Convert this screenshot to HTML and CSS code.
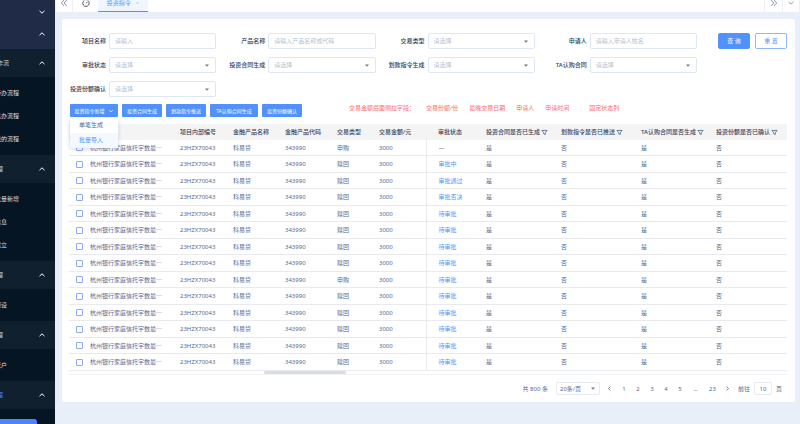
FILE: index.html
```
<!DOCTYPE html>
<html lang="zh-CN">

<head>
	<meta charset="UTF-8">
	<title>投资指令</title>
	<link rel="stylesheet" href="styles.css">
</head>

<body>
	<svg class="defs">
		<symbol id="up" viewBox="0 0 8 8"><path d="M1.5 5.2 4 2.8l2.5 2.4" /></symbol>
		<symbol id="down" viewBox="0 0 8 8"><path d="M1.5 2.8 4 5.2l2.5-2.4" /></symbol>
		<symbol id="left" viewBox="0 0 8 8"><path d="M5 1.8 2.8 4 5 6.2" /></symbol>
		<symbol id="right" viewBox="0 0 8 8"><path d="M3 1.8 5.2 4 3 6.2" /></symbol>
		<symbol id="dleft" viewBox="0 0 8 8"><path d="M4 1 1.3 4 4 7M6.8 1 4.1 4l2.7 3" /></symbol>
		<symbol id="dright" viewBox="0 0 8 8"><path d="M1.2 1l2.7 3-2.7 3M4 1l2.7 3L4 7" /></symbol>
		<symbol id="gauge" viewBox="0 0 8 8"><path d="M2.4 1.4a3.2 3.2 0 1 0 3.2 0M4 4.4l1.5-1.6M2.6.6h2.8" /></symbol>
		<symbol id="filter" viewBox="0 0 8 8"><path d="M1 1.6h6L4.9 4.3v2L3.1 5.5V4.3z" /></symbol>
	</svg>

	<nav class="sidebar">
		<div class="menu">
			<button class="top first"><svg><use href="#down" /></svg></button>
			<button class="top"><svg><use href="#up" /></svg></button>
			<button class="group"><span>工作流</span><svg><use href="#up" /></svg></button>
			<ul>
				<li><a href="#">待办流程</a></li>
				<li><a href="#">已办流程</a></li>
				<li><a href="#">我的流程</a></li>
			</ul>
			<button class="group"><span>管理</span><svg><use href="#up" /></svg></button>
			<ul>
				<li><a href="#">批量新增</a></li>
				<li><a href="#">信息</a></li>
				<li><a href="#">成立</a></li>
			</ul>
			<button class="group"><span>管理</span><svg><use href="#up" /></svg></button>
			<ul>
				<li><a href="#">预设</a></li>
			</ul>
			<button class="group"><span>管理</span><svg><use href="#up" /></svg></button>
			<ul>
				<li><a href="#">账户</a></li>
			</ul>
			<button class="group active"><span>管理</span><svg><use href="#up" /></svg></button>
			<ul>
				<li><a class="current" href="#"></a></li>
			</ul>
		</div>
	</nav>

	<main>
		<header class="tabs">
			<button class="tool"><svg><use href="#dleft" /></svg></button>
			<button class="home"><svg><use href="#gauge" /></svg></button>
			<a class="tab" href="#">投资指令<span>×</span></a>
			<button class="tool end"><svg><use href="#dright" /></svg></button>
			<button class="tool"><svg><use href="#down" /></svg></button>
		</header>

		<section class="card">
			<form class="search">
				<div class="fields">
					<label for="project">项目名称</label>
					<input id="project" type="text" placeholder="请输入">
					<label for="product">产品名称</label>
					<input id="product" type="text" placeholder="请输入产品名称或代码">
					<label for="type">交易类型</label>
					<select id="type"><option>请选择</option></select>
					<label for="user">申请人</label>
					<input id="user" type="text" placeholder="请输入申请人姓名">
					<label for="state">审批状态</label>
					<select id="state"><option>请选择</option></select>
					<label for="contract">投资合同生成</label>
					<select id="contract"><option>请选择</option></select>
					<label for="transfer">划款指令生成</label>
					<select id="transfer"><option>请选择</option></select>
					<label for="ta">TA认购合同</label>
					<select id="ta"><option>请选择</option></select>
					<label for="share">投资份额确认</label>
					<select id="share"><option>请选择</option></select>
				</div>
				<button type="button" class="query">查 询</button>
				<button type="reset" class="reset">重 置</button>
			</form>

			<div class="actions">
				<div class="dropdown">
					<button class="wide">投资指令新增<svg><use href="#down" /></svg></button>
					<div class="options">
						<a href="#">单笔生成</a>
						<a class="hover" href="#">批量导入</a>
					</div>
				</div>
				<button>投资合同生成</button>
				<button>划款指令推送</button>
				<button class="wide">TA认购合同生成</button>
				<button>投资份额确认</button>
				<p class="note">
					<span>交易金额后面侧拉字段：</span>
					<span>交易份额/份</span>
					<span>最晚交易日期</span>
					<span>申请人</span>
					<span>申请时间</span>
					<span class="fixed">固定状态列</span>
				</p>
			</div>

			<table>
				<colgroup>
					<col class="w-check">
					<col class="w-name">
					<col class="w-code">
					<col class="w-mid">
					<col class="w-mid">
					<col class="w-type">
					<col class="w-money">
					<col class="w-status">
					<col class="w-flag">
					<col class="w-flag-l">
					<col class="w-flag">
					<col class="w-last">
				</colgroup>
				<thead>
					<tr>
						<th></th>
						<th></th>
						<th>项目内部编号</th>
						<th>金融产品名称</th>
						<th>金融产品代码</th>
						<th>交易类型</th>
						<th>交易金额/元</th>
						<th class="status">审批状态</th>
						<th>投资合同是否已生成<svg><use href="#filter" /></svg></th>
						<th>划款指令是否已推送<svg><use href="#filter" /></svg></th>
						<th>TA认购合同是否生成<svg><use href="#filter" /></svg></th>
						<th>投资份额是否已确认<svg><use href="#filter" /></svg></th>
					</tr>
				</thead>
				<tbody></tbody>
			</table>
			<div class="scroll"><div class="thumb"></div></div>

			<footer class="pager">
				<span class="total">共 800 条</span>
				<select class="size" aria-label="每页条数"><option>20条/页</option></select>
				<button aria-label="上一页"><svg><use href="#left" /></svg></button>
				<button>1</button>
				<button>2</button>
				<button>3</button>
				<button>4</button>
				<button>5</button>
				<span class="more">...</span>
				<button class="last">23</button>
				<button aria-label="下一页"><svg><use href="#right" /></svg></button>
				<label for="page">前往</label>
				<input id="page" type="text" value="10">
				<span>页</span>
			</footer>
		</section>
	</main>

	<script>
		var states = ['—', '审批中', '审批通过', '审批否决']
		var tbody = document.querySelector('tbody')
		var res = ''

		// 生成表格数据
		for (var i = 0; i < 14; i++) {
			var type = i === 0 || i === 8 ? '申购' : '赎回'
			var text = states[i] || '待审批'
			res += '<tr>'
			res += '<td class="check"><input type="checkbox" aria-label="选择第' + (i + 1) + '行"></td>'
			res += '<td>杭州银行家庭信托字数最⋯</td><td>23HZX70043</td><td>科易贷</td><td>343990</td>'
			res += '<td>' + type + '</td><td>3000</td>'
			res += '<td class="status">' + (i ? '<a href="#">' + text + '</a>' : text) + '</td>'
			res += '<td>是</td><td>否</td><td>是</td><td>否</td>'
			res += '</tr>'
		}
		tbody.innerHTML = res
	</script>
</body>

</html>
```
FILE: styles.css
```
* {
	box-sizing: border-box;
}

body {
	display: flex;
	min-height: 100vh;
	margin: 0;
	overflow: hidden;
	background-color: #e9eff8;
	color: #566a94;
	font: 6px/10px "Noto Sans", "Noto Sans CJK SC", sans-serif;
}

button,
input,
select {
	margin: 0;
	padding: 0;
	border: 0;
	background: none;
	color: inherit;
	font: inherit;
}

a {
	color: #5594fb;
	text-decoration: none;
}

svg {
	width: 8px;
	height: 8px;
	fill: none;
	stroke: currentColor;
}

.defs {
	position: absolute;
	width: 0;
	height: 0;
}

/* 左侧菜单 */
.sidebar {
	flex: none;
	width: 55px;
	height: 100vh;
	overflow: hidden;
	background-color: #051523;
}

.menu {
	margin-left: -24px;
}

.menu button {
	display: flex;
	align-items: center;
	justify-content: space-between;
	width: 100%;
	height: 28px;
	padding: 0 9px 0 15px;
	background-color: #10202e;
	color: #c3cad2;
}

.menu .top {
	justify-content: flex-end;
	height: 26px;
	padding-bottom: 4px;
	background-color: #202b47;
}

.menu .first {
	height: 23px;
	padding-bottom: 0;
}

.menu svg {
	color: #fff;
}

.menu .active {
	color: #4383f5;
}

.menu ul {
	margin: 0;
	padding: 5px 0 4px;
	list-style: none;
}

.menu li a {
	display: block;
	height: 23px;
	padding-left: 19px;
	color: #d5dae0;
	line-height: 23px;
}

.menu .current {
	width: 61px;
	margin-top: 5px;
	border-radius: 3px;
	background-color: #4b86f8;
}

main {
	flex: 1;
	min-width: 0;
}

/* 顶部标签 */
.tabs {
	display: flex;
	align-items: flex-end;
	height: 12px;
	background-color: #fff;
	color: #8d99b3;
}

.tabs button,
.tab {
	display: flex;
	flex: none;
	align-items: center;
	justify-content: center;
	height: 18px;
}

.tabs .tool {
	width: 18px;
	border: solid #edf1f7;
	border-width: 0 1px;
}

.tabs .end {
	margin-left: auto;
	border-right: 0;
}

.tabs .home {
	width: 25px;
	color: #4c5568;
}

.tab {
	gap: 5px;
	width: 50px;
	border-bottom: 1px solid #5590f8;
	background-color: #f0f5fe;
}

.tab span {
	color: #c3cede;
}

.card {
	margin: 7px 5px 0 7px;
	padding: 14px 8px 7px 7px;
	border-radius: 2px;
	background-color: #fff;
}

/* 查询条件 */
.search {
	display: flex;
	align-items: flex-start;
	margin-left: -1px;
}

.fields {
	display: grid;
	flex: 1;
	grid-template-columns: 38px 1fr 46px 1fr 46px 1fr 49px 1fr;
	gap: 8px 3px;
	align-items: center;
	margin-right: 21px;
}

.fields label {
	color: #303c56;
	font-weight: 500;
	text-align: right;
	white-space: nowrap;
}

.fields input,
.fields select {
	width: 100%;
	min-width: 0;
	height: 16px;
	padding: 0 5px;
	border: 1px solid #dde7f5;
	border-radius: 2px;
	color: #b4bfd2;
}

.fields input::placeholder {
	color: #b4bfd2;
}

select {
	appearance: none;
	background: url("data:image/svg+xml,%3Csvg xmlns='http://www.w3.org/2000/svg' viewBox='0 0 4 3'%3E%3Cpath d='M0 .5h4L2 2.8z' fill='%23667a99'/%3E%3C/svg%3E") no-repeat right 6px center / 4px 3px;
}

.query,
.reset {
	width: 32px;
	height: 16px;
	border: 1px solid #5594fb;
	border-radius: 2px;
}

.query {
	margin-right: 5px;
	background-color: #5191fc;
	color: #fff;
}

.reset {
	border-color: #8fb8fb;
	color: #5594fb;
}

/* 操作按钮 */
.actions {
	display: flex;
	gap: 4px;
	margin: 7px 0 7px 1px;
}

.actions button {
	display: flex;
	align-items: center;
	justify-content: center;
	width: 40px;
	height: 13px;
	border-radius: 1px;
	background-color: #5191fc;
	color: #fff;
	font-size: 5px;
	white-space: nowrap;
}

.actions .wide {
	width: 48px;
}

.dropdown {
	position: relative;
}

.dropdown svg {
	width: 6px;
	height: 6px;
	margin-left: 3px;
}

.options {
	position: absolute;
	top: 14px;
	left: 0;
	width: 48px;
	border-radius: 1px;
	background-color: #fff;
	box-shadow: 0 1px 4px rgba(60, 90, 150, 0.25);
}

.options a {
	display: block;
	padding-left: 9px;
	color: #566a94;
	line-height: 15px;
}

.options .hover {
	background-color: #f4f8ff;
	color: #5594fb;
}

.note {
	display: flex;
	gap: 11px;
	margin: 0 0 0 43px;
	color: #fb6a68;
	line-height: 9px;
	white-space: nowrap;
}

.note .fixed {
	margin-left: 9px;
}

/* 列表 */
table {
	width: 100%;
	height: 247px;
	border-collapse: collapse;
	table-layout: fixed;
}

.w-check { width: 21px; }
.w-name { width: 90px; }
.w-code { width: 53px; }
.w-mid { width: 52px; }
.w-type { width: 42px; }
.w-money { width: 47px; }
.w-status { width: 60px; }
.w-flag { width: 75px; }
.w-flag-l { width: 80px; }
.w-last { width: 71px; }

th,
td {
	padding: 0;
	text-align: left;
	white-space: nowrap;
}

th {
	height: 16px;
	background-color: #f4f4f5;
	color: #384460;
	font-weight: 500;
}

th svg {
	width: 7px;
	height: 7px;
	margin-left: 1px;
	color: #566a94;
	vertical-align: middle;
}

td {
	border-bottom: 1px solid #e9eaed;
}

.status {
	padding-left: 12px;
}

td.status {
	border-left: 1px solid #e9eaed;
}

.check {
	padding-left: 7px;
}

.check input {
	display: block;
	width: 7px;
	height: 7px;
	border: 1px solid #8ba9f8;
	border-radius: 1px;
	appearance: none;
}

.scroll {
	height: 4px;
	border-bottom: 1px solid #f1f2f4;
}

.thumb {
	width: 82px;
	height: 3px;
	margin-left: 195px;
	border-radius: 2px;
	background-color: #d8dce5;
}

/* 分页 */
.pager {
	display: flex;
	align-items: center;
	justify-content: flex-end;
	margin-top: 7px;
	padding-right: 5px;
}

.pager button {
	display: flex;
	align-items: center;
	justify-content: center;
	width: 14px;
	height: 13px;
}

.pager svg {
	width: 7px;
	height: 7px;
}

.pager .size {
	width: 44px;
	height: 13px;
	margin: 0 3px 0 8px;
	padding-left: 3px;
	border: 1px solid #e7eaf0;
	border-radius: 1px;
	background-position: right 4px center;
}

.pager .more {
	width: 17px;
	text-align: center;
}

.pager .last {
	width: 17px;
}

.pager label {
	margin: 0 4px 0 3px;
}

.pager input {
	width: 18px;
	height: 13px;
	margin-right: 4px;
	border: 1px solid #e7eaf0;
	border-radius: 1px;
	text-align: center;
}
```
